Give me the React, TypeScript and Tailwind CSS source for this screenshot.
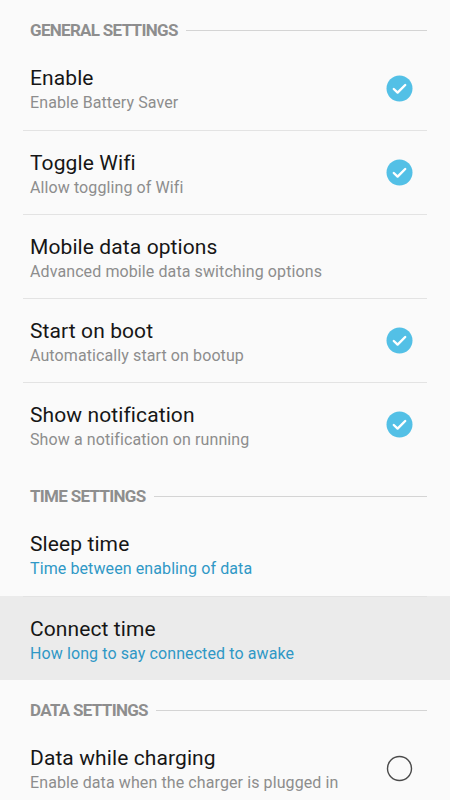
import React from "react";

type Row = { title: string; sub: string; check?: boolean | null; blue?: boolean; highlight?: boolean };

const font = { fontFamily: "Roboto, 'Noto Sans', sans-serif" };

function Header({ label }: { label: string }) {
  return (
    <div className="flex items-center h-[46px] pt-[20px] pb-[6px] pl-[30px] pr-[23px]">
      <span className="text-[17px] leading-[20px] font-bold text-[#8e8e8e] tracking-[-0.7px] whitespace-nowrap">{label}</span>
      <div className="flex-1 h-px bg-[#d4d4d4] ml-[8px]" />
    </div>
  );
}

function Check({ state }: { state: boolean }) {
  if (state) {
    return (
      <svg width="27" height="27" viewBox="0 0 27 27">
        <circle cx="13.5" cy="13.5" r="13" fill="#53c0e6" />
        <path d="M7.8 14 L11.6 17.6 L19.2 10" fill="none" stroke="#ffffff" strokeWidth="2.4" strokeLinecap="round" strokeLinejoin="round" />
      </svg>
    );
  }
  return (
    <svg width="27" height="27" viewBox="0 0 27 27">
      <circle cx="13.5" cy="13.5" r="12" fill="none" stroke="#4a4a4a" strokeWidth="1.4" />
    </svg>
  );
}

function Item({ row, first }: { row: Row; first: boolean }) {
  return (
    <div className={row.highlight ? "bg-[#ebebeb]" : ""}>
      <div className={"mx-[23px] h-[84px] flex items-center pl-[7px] pr-[14px] " + (first ? "" : "border-t border-[#e3e3e3]")}>
        <div className="flex-1 flex flex-col pt-[3px]">
          <span className="text-[21px] leading-[26px] text-[#161616] tracking-[0.1px]">{row.title}</span>
          <span className={"text-[16px] leading-[22px] mt-[1px] tracking-[0.1px] " + (row.blue ? "text-[#2f98c6]" : "text-[#8d8d8d]")}>{row.sub}</span>
        </div>
        {row.check !== undefined && row.check !== null ? <Check state={row.check} /> : null}
      </div>
    </div>
  );
}

export default function App() {
  const general: Row[] = [
    { title: "Enable", sub: "Enable Battery Saver", check: true },
    { title: "Toggle Wifi", sub: "Allow toggling of Wifi", check: true },
    { title: "Mobile data options", sub: "Advanced mobile data switching options" },
    { title: "Start on boot", sub: "Automatically start on bootup", check: true },
    { title: "Show notification", sub: "Show a notification on running", check: true },
  ];
  const time: Row[] = [
    { title: "Sleep time", sub: "Time between enabling of data", blue: true },
    { title: "Connect time", sub: "How long to say connected to awake", blue: true, highlight: true },
  ];
  const data: Row[] = [{ title: "Data while charging", sub: "Enable data when the charger is plugged in", check: false }];
  return (
    <div className="w-[450px] h-[800px] overflow-hidden bg-[#fafafa]" style={font}>
      <Header label="GENERAL SETTINGS" />
      {general.map((r, i) => (
        <Item key={r.title} row={r} first={i === 0} />
      ))}
      <Header label="TIME SETTINGS" />
      {time.map((r, i) => (
        <Item key={r.title} row={r} first={i === 0} />
      ))}
      <Header label="DATA SETTINGS" />
      {data.map((r, i) => (
        <Item key={r.title} row={r} first={i === 0} />
      ))}
    </div>
  );
}
